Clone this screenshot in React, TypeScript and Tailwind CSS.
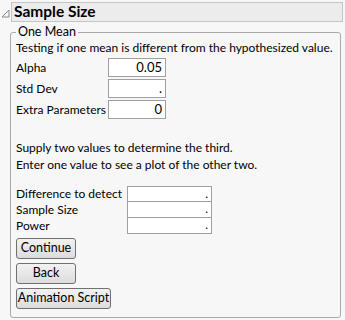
export default function App() {
  const font = { fontFamily: 'Lato, "Noto Sans", sans-serif' }

  const paramRows = [
    { label: "Alpha", value: "0.05" },
    { label: "Std Dev", value: "." },
    { label: "Extra Parameters", value: "0" },
  ]

  const solveRows = ["Difference to detect", "Sample Size", "Power"]

  return (
    <div className="w-[345px] h-[320px] bg-[#f7f7f7] text-[12px] text-black overflow-hidden whitespace-nowrap" style={font}>
      {/* Header */}
      <div className="flex items-start pt-[2px]">
        <div className="w-[11px] flex justify-center pt-[7px]">
          <svg width="9" height="9" viewBox="0 0 9 9">
            <path d="M8 1 L8 8 L1 8 Z" fill="none" stroke="#8a8a8a" strokeWidth="1" />
          </svg>
        </div>
        <div className="w-[332px] h-[20px] bg-[#ececec] border border-[#c4c4c4] flex items-center pl-[2px]">
          <span className="text-[15.5px] font-bold leading-none text-black">Sample Size</span>
        </div>
      </div>

      {/* Group box */}
      <div className="relative ml-[10px] mt-[10px] w-[331px] h-[286px] border border-[#a9a9a9] rounded-[3px] pl-[5px] pt-[7px]">
        <span className="absolute -top-[8px] left-[5px] bg-[#f7f7f7] px-[2px] leading-[13px] text-[12.5px]">One Mean</span>
        <div className="leading-[15px]">Testing if one mean is different from the hypothesized value.</div>

        <div className="mt-[3px] flex flex-col gap-[2px]">
          {paramRows.map((r) => (
            <div key={r.label} className="flex items-center">
              <span className="w-[92px] leading-[16px]">{r.label}</span>
              <div className="w-[58px] h-[19px] bg-white border border-[#a0a0a0] text-right pr-[3px] leading-[17px] text-[13px]">
                {r.value}
              </div>
            </div>
          ))}
        </div>

        <div className="mt-[20px] leading-[17px]">
          <div>Supply two values to determine the third.</div>
          <div>Enter one value to see a plot of the other two.</div>
        </div>

        <div className="mt-[13px] flex flex-col">
          {solveRows.map((label, i) => (
            <div key={label} className="flex items-center">
              <span className="w-[111px] leading-[16px]">{label}</span>
              <div
                className={`w-[85px] h-[16px] bg-white border-x border-b border-[#a0a0a0] text-right pr-[3px] leading-[14px] ${i === 0 ? "border-t" : ""}`}
              >
                .
              </div>
            </div>
          ))}
        </div>

        <div className="mt-[4px] flex flex-col items-start gap-[4px] text-[12.5px]">
          <button className="w-[60px] h-[21px] rounded-[3px] border border-[#707070] bg-gradient-to-b from-[#f2f2f2] to-[#dcdcdc] leading-none">
            Continue
          </button>
          <button className="w-[60px] h-[21px] rounded-[3px] border border-[#707070] bg-gradient-to-b from-[#f2f2f2] to-[#dcdcdc] leading-none">
            Back
          </button>
          <button className="w-[95px] h-[21px] rounded-[3px] border border-[#707070] bg-gradient-to-b from-[#f2f2f2] to-[#dcdcdc] leading-none">
            Animation Script
          </button>
        </div>
      </div>
    </div>
  )
}
